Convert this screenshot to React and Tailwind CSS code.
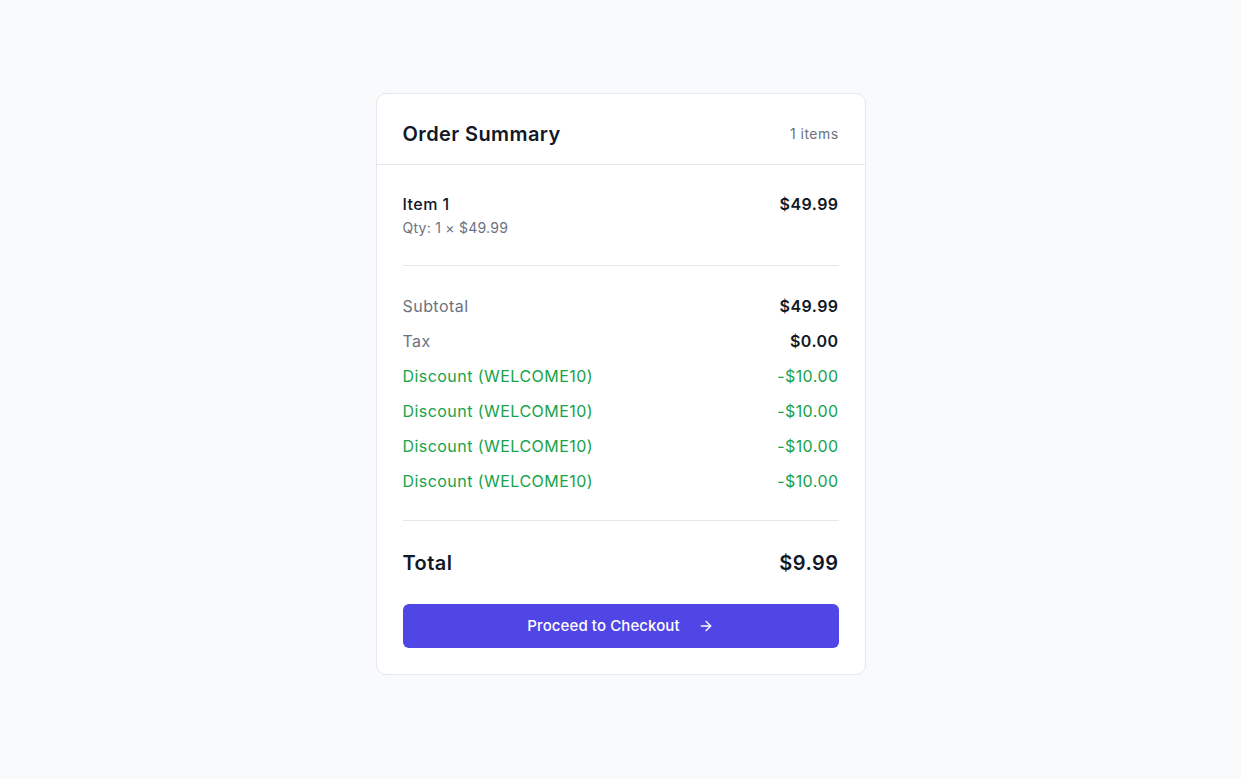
import React from "react";
import { ArrowRight } from "lucide-react";

export default function App() {
  const discounts = [1, 2, 3, 4];
  return (
    <div
      className="min-h-screen bg-[#f9fafb] pt-[93px] tracking-[0.45px]"
      style={{ fontFamily: "Inter, 'Noto Sans', sans-serif" }}
    >
      <div className="mx-auto w-[490px] rounded-[10px] border border-[#e5e7eb] bg-white">
        <div className="flex items-center justify-between border-b border-[#e5e7eb] px-[26px] pt-[26px] pb-[16px]">
          <h2 className="text-[20px] leading-[28px] font-semibold tracking-[0.4px] text-[#111827]">
            Order Summary
          </h2>
          <span className="text-[14px] leading-[20px] text-[#6b7280]">1 items</span>
        </div>
        <div className="px-[26px]">
          <div className="flex items-start justify-between border-b border-[#e5e7eb] pt-[27px] pb-[27px]">
            <div>
              <div className="text-[16px] leading-[24px] font-medium text-[#111827]">Item 1</div>
              <div className="mt-[2px] text-[14px] leading-[20px] tracking-[0.25px] text-[#6b7280]">Qty: 1 × $49.99</div>
            </div>
            <div className="text-[16px] leading-[24px] font-semibold text-[#111827]">$49.99</div>
          </div>
          <div className="flex flex-col gap-[11px] border-b border-[#e5e7eb] pt-[28px] pb-[27px] text-[16px] leading-[24px]">
            <div className="flex justify-between">
              <span className="text-[#6b7280]">Subtotal</span>
              <span className="font-semibold text-[#111827]">$49.99</span>
            </div>
            <div className="flex justify-between">
              <span className="text-[#6b7280]">Tax</span>
              <span className="font-semibold text-[#111827]">$0.00</span>
            </div>
            {discounts.map((d) => (
              <div key={d} className="flex justify-between text-[#16a34a]">
                <span>Discount (WELCOME10)</span>
                <span>-$10.00</span>
              </div>
            ))}
          </div>
          <div className="flex items-center justify-between pt-[28px] pb-[27px]">
            <span className="text-[20px] leading-[28px] font-semibold text-[#111827]">Total</span>
            <span className="text-[20px] leading-[28px] font-semibold text-[#111827]">$9.99</span>
          </div>
          <div className="pb-[26px]">
            <button className="flex h-[44px] w-full items-center justify-center gap-[18px] rounded-[6px] bg-[#5046e5] text-[15px] font-medium tracking-[0.1px] text-white">
              <span>Proceed to Checkout</span>
              <ArrowRight size={16} strokeWidth={2} />
            </button>
          </div>
        </div>
      </div>
    </div>
  );
}
